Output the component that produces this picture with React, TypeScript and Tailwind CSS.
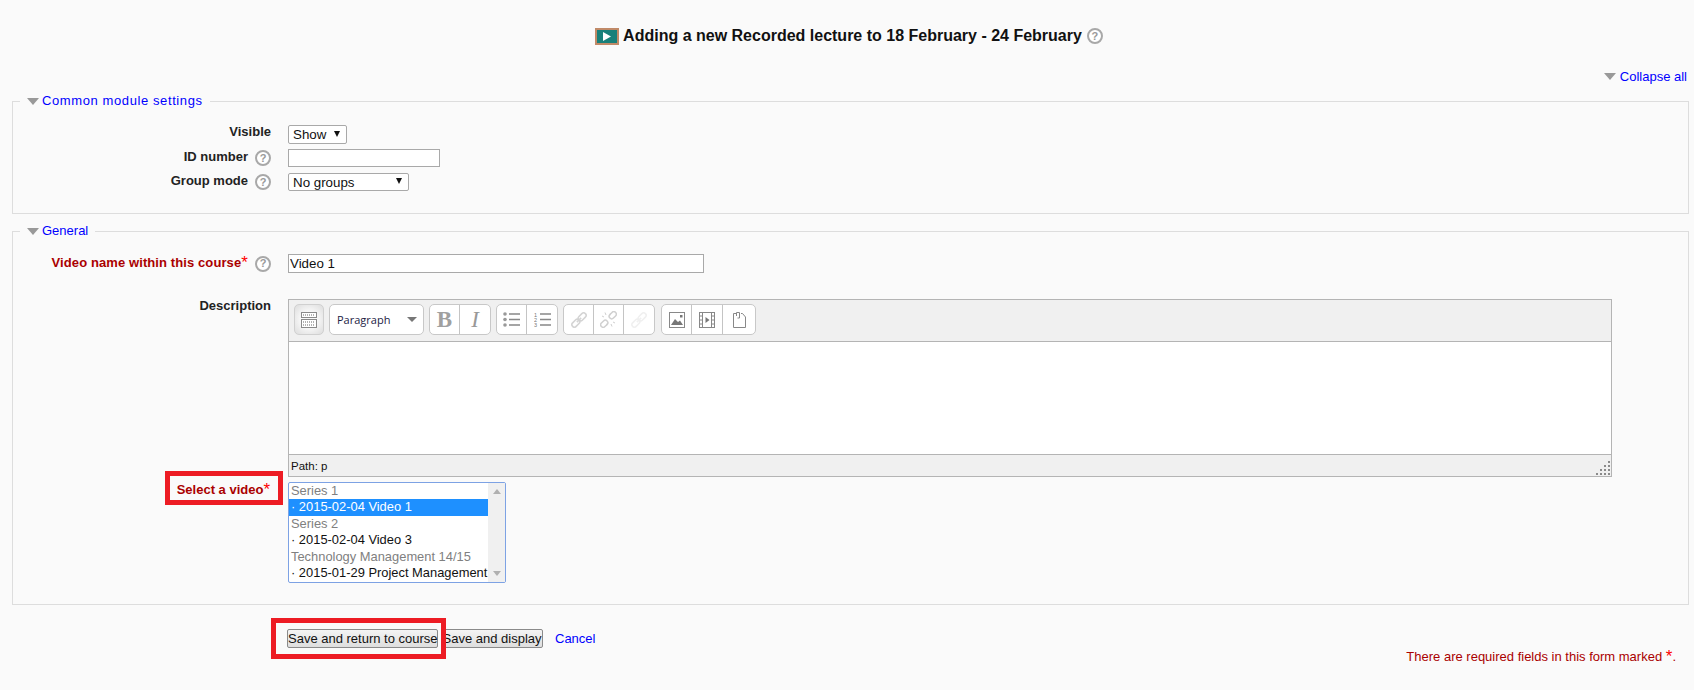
import React from "react";

function HelpIcon() {
  return (
    <span className="flex h-[16px] w-[16px] shrink-0 items-center justify-center rounded-full border-2 border-[#a8a8a8] bg-white text-[11px] font-bold leading-none text-[#999999]">
      ?
    </span>
  );
}

function Triangle({ className = "" }: { className?: string }) {
  return (
    <svg className={className} width="12" height="7" viewBox="0 0 12 7">
      <path d="M0 0h12L6 7z" fill="#999999" />
    </svg>
  );
}

function Asterisk() {
  return <span className="relative top-[1px] text-[17px] font-normal leading-[0] text-[#ff0000]">*</span>;
}

function Label({
  text,
  help,
  required,
  className = "",
}: {
  text: string;
  help?: boolean;
  required?: boolean;
  className?: string;
}) {
  return (
    <div className={`flex w-[258px] shrink-0 items-center justify-end gap-[7px] ${className}`}>
      <span className={`-mt-[3px] font-bold ${required ? "tracking-[0.1px] text-[#aa0000]" : "text-[#222222]"}`}>
        {text}
        {required && <Asterisk />}
      </span>
      {help && <HelpIcon />}
    </div>
  );
}

function Row({ children, className = "" }: { children: React.ReactNode; className?: string }) {
  return <div className={`flex gap-[17px] ${className}`}>{children}</div>;
}

function FakeSelect({ text, className = "" }: { text: string; className?: string }) {
  return (
    <div
      className={`flex items-center justify-between rounded-[2px] border border-[#a9a9a9] bg-white pl-[4px] pr-[6px] text-[13.33px] text-[#111111] ${className}`}
    >
      <span>{text}</span>
      <svg width="6" height="6" viewBox="0 0 6 6" className="-mt-[2px]">
        <path d="M0 0h6L3 6z" fill="#111111" />
      </svg>
    </div>
  );
}

function Legend({ text, className = "" }: { text: string; className?: string }) {
  return (
    <legend className="ml-[7px] flex items-center gap-[3px] px-[7px] text-[13px] leading-[15px] text-[#0000ff]">
      <Triangle />
      <span className={`-mt-[2px] ${className}`}>{text}</span>
    </legend>
  );
}

function ToolGroup({ children, className = "" }: { children: React.ReactNode; className?: string }) {
  return (
    <div className={`flex h-[31px] divide-x divide-[#c4c4c4] rounded-[5px] border border-[#c8c8c8] bg-white ${className}`}>
      {children}
    </div>
  );
}

function ToolCell({ children, className = "w-[30px]" }: { children: React.ReactNode; className?: string }) {
  return <div className={`flex items-center justify-center ${className}`}>{children}</div>;
}

function KeyboardIcon() {
  return (
    <svg width="16" height="16" viewBox="0 0 16 16" fill="none">
      <rect x="0.500" y="0.500" width="15" height="5" fill="#fff" stroke="#8a8a8a" />
      <rect x="0.500" y="7.500" width="15" height="8" fill="#fff" stroke="#8a8a8a" />
      <path d="M2 3h12M2 10h12M2 13h12" stroke="#666" strokeDasharray="1 1" />
    </svg>
  );
}

function BulletIcon() {
  return (
    <svg width="17" height="15" viewBox="0 0 17 15">
      <circle cx="2" cy="2" r="1.800" fill="#999" />
      <circle cx="2" cy="7.500" r="1.800" fill="#999" />
      <circle cx="2" cy="13" r="1.800" fill="#999" />
      <path d="M6 2h11M6 7.500h11M6 13h11" stroke="#888" strokeWidth="1.500" />
    </svg>
  );
}

function NumberIcon() {
  return (
    <svg width="17" height="15" viewBox="0 0 17 15">
      <text x="0" y="5" fontSize="5.500" fill="#777" fontFamily="Liberation Sans">1</text>
      <text x="0" y="10" fontSize="5.500" fill="#777" fontFamily="Liberation Sans">2</text>
      <text x="0" y="15" fontSize="5.500" fill="#777" fontFamily="Liberation Sans">3</text>
      <path d="M6 2h11M6 7.500h11M6 13h11" stroke="#888" strokeWidth="1.500" />
    </svg>
  );
}

function ChainIcon({ color }: { color: string }) {
  return (
    <svg width="16" height="16" viewBox="0 0 16 16" fill="none" stroke={color} strokeWidth="1.600">
      <g transform="rotate(-45 8 8)">
        <rect x="-1" y="5.500" width="9" height="5" rx="2.500" />
        <rect x="8" y="5.500" width="9" height="5" rx="2.500" />
        <path d="M5 8h6" />
      </g>
    </svg>
  );
}

function BrokenChainIcon({ color }: { color: string }) {
  return (
    <svg width="17" height="17" viewBox="0 0 17 17" fill="none" stroke={color} strokeWidth="1.500">
      <g transform="rotate(-45 8.500 8.500)">
        <rect x="-1.500" y="6" width="8" height="5" rx="2.500" />
        <rect x="10.500" y="6" width="8" height="5" rx="2.500" />
      </g>
      <path d="M2 5l2 1M5 1.500l1 2.500M15 12l-2-1M12 15.500l-1-2.500M10.500 2l-.5 2.500M6.500 15l.5-2.500" strokeWidth="1" />
    </svg>
  );
}

function ImageIcon() {
  return (
    <svg width="16" height="16" viewBox="0 0 16 16">
      <rect x="0.500" y="0.500" width="15" height="15" fill="#fff" stroke="#888" />
      <path d="M2 13l4-6 3 3 2-1.500 3 4.500z" fill="#777" />
      <rect x="11" y="3" width="2.500" height="2.500" fill="#777" />
    </svg>
  );
}

function FilmIcon() {
  return (
    <svg width="16" height="16" viewBox="0 0 16 16">
      <rect x="0.500" y="0.500" width="15" height="15" fill="#fff" stroke="#888" />
      <path d="M3.500 0v16M12.500 0v16" stroke="#888" />
      <path d="M0.500 4h3M0.500 8h3M0.500 12h3M12.500 4h3M12.500 8h3M12.500 12h3" stroke="#888" />
      <path d="M6.500 5l4 3-4 3z" fill="#777" />
    </svg>
  );
}

function PasteIcon() {
  return (
    <svg width="15" height="17" viewBox="0 0 15 17" fill="none" stroke="#888">
      <path d="M4 2.500H1.500v14h12V6l-3-3.500H9" />
      <path d="M4.500 5V1.500h3V7h-2" />
    </svg>
  );
}

function Editor() {
  return (
    <div className="flex h-[178px] w-[1324px] flex-col border border-[#b4b4b4] bg-white">
      <div className="flex h-[42px] shrink-0 gap-[5px] border-b border-[#b4b4b4] bg-[#f0f0f0] pl-[5px] pt-[4px]">
        <div className="flex h-[31px] w-[30px] items-center justify-center rounded-[5px] border border-[#d0d0d0] bg-[radial-gradient(circle,#f8f8f8_40%,#dcdcdc_100%)]">
          <KeyboardIcon />
        </div>
        <div className="flex h-[31px] w-[95px] items-center justify-between rounded-[5px] border border-[#c8c8c8] bg-white pl-[7px] pr-[6px] font-['Open_Sans',sans-serif] text-[11px] text-[#222244]">
          <span>Paragraph</span>
          <svg width="10" height="5" viewBox="0 0 10 5">
            <path d="M0 0h10L5 5z" fill="#777777" />
          </svg>
        </div>
        <ToolGroup>
          <ToolCell>
            <span className="font-['Liberation_Serif',serif] text-[23px] font-bold leading-none text-[#a0a0a0]">B</span>
          </ToolCell>
          <ToolCell>
            <span className="font-['Liberation_Serif',serif] text-[23px] italic leading-none text-[#999999]">I</span>
          </ToolCell>
        </ToolGroup>
        <ToolGroup>
          <ToolCell>
            <BulletIcon />
          </ToolCell>
          <ToolCell>
            <NumberIcon />
          </ToolCell>
        </ToolGroup>
        <ToolGroup>
          <ToolCell>
            <ChainIcon color="#d4d4d4" />
          </ToolCell>
          <ToolCell>
            <BrokenChainIcon color="#d0d0d0" />
          </ToolCell>
          <ToolCell>
            <ChainIcon color="#f0f0f0" />
          </ToolCell>
        </ToolGroup>
        <ToolGroup className="ml-px">
          <ToolCell>
            <ImageIcon />
          </ToolCell>
          <ToolCell className="w-[31px]">
            <FilmIcon />
          </ToolCell>
          <ToolCell className="w-[32px]">
            <PasteIcon />
          </ToolCell>
        </ToolGroup>
      </div>
      <div className="flex-1" />
      <div className="flex h-[22px] shrink-0 items-end justify-between border-t border-[#b4b4b4] bg-[#f0f0f0] pl-[2px] text-[11.500px] leading-[20px] text-[#111111]">
        <span>Path: p</span>
        <svg width="15" height="15" viewBox="0 0 15 15" fill="#8a8a8a">
          <path d="M12 0h2v2h-2zM8 4h2v2H8zM12 4h2v2h-2zM4 8h2v2H4zM8 8h2v2H8zM12 8h2v2h-2zM0 12h2v2H0zM4 12h2v2H4zM8 12h2v2H8zM12 12h2v2h-2z" />
        </svg>
      </div>
    </div>
  );
}

function VideoList() {
  const options = [
    { text: "Series 1", group: true },
    { text: "· 2015-02-04 Video 1", selected: true },
    { text: "Series 2", group: true },
    { text: "· 2015-02-04 Video 3" },
    { text: "Technology Management 14/15", group: true },
    { text: "· 2015-01-29 Project Management" },
  ];
  return (
    <div className="flex h-[101px] w-[218px] rounded-[2px] border border-[#7da2e4] bg-white text-[12.900px] leading-[16.400px]">
      <div className="w-[199px] overflow-hidden whitespace-nowrap">
        {options.map((o) => (
          <div
            key={o.text}
            className={`pl-[2px] ${
              o.selected ? "bg-[#1e90ff] text-white" : o.group ? "text-[#808080]" : "text-[#111111]"
            }`}
          >
            {o.text}
          </div>
        ))}
      </div>
      <div className="flex flex-1 flex-col items-center justify-between bg-[#f0f0f0] py-[6px]">
        <svg width="8" height="5" viewBox="0 0 8 5">
          <path d="M0 5h8L4 0z" fill="#b0b0b0" />
        </svg>
        <svg width="8" height="5" viewBox="0 0 8 5">
          <path d="M0 0h8L4 5z" fill="#b0b0b0" />
        </svg>
      </div>
    </div>
  );
}

export default function App() {
  return (
    <div className="min-h-[690px] w-full overflow-hidden bg-[#fafafa] font-['Liberation_Sans',Arial,sans-serif] text-[13px] leading-[15px] text-[#222222]">
      <div className="ml-[4px] flex items-center justify-center gap-[4px] pt-[27px]">
        <svg width="24" height="17" viewBox="0 0 24 17">
          <rect width="24" height="17" fill="#c08a68" />
          <rect x="2" y="2" width="20" height="13" fill="#18807a" />
          <path d="M8 4l8 4.500-8 4.500z" fill="#ffffff" />
        </svg>
        <h2 className="text-[16px] font-bold leading-[18px] text-[#111111]">
          Adding a new Recorded lecture to 18 February - 24 February
        </h2>
        <span className="ml-[1px]">
          <HelpIcon />
        </span>
      </div>

      <div className="mt-[24px] flex items-center justify-end gap-[4px] pr-[7px]">
        <Triangle />
        <span className="text-[#0000ff]">Collapse all</span>
      </div>

      <form className="ml-3 mr-[5px]">
        <fieldset className="mt-[11px] h-[119px] border border-[#dddddd] pt-[17px]">
          <Legend text="Common module settings" className="tracking-[0.6px]" />
          <Row className="h-[19px] items-center">
            <Label text="Visible" className="pb-[4px]" />
            <FakeSelect text="Show" className="h-[19px] w-[59px]" />
          </Row>
          <Row className="mt-[5px] h-[18px] items-center">
            <Label text="ID number" help />
            <input className="h-[18px] w-[152px] border border-[#a9a9a9] bg-white" />
          </Row>
          <Row className="mt-[6px] h-[18px] items-center">
            <Label text="Group mode" help />
            <FakeSelect text="No groups" className="h-[18px] w-[121px]" />
          </Row>
        </fieldset>

        <fieldset className="mt-[11px] h-[380px] border border-[#dddddd] pt-[16px]">
          <Legend text="General" />
          <Row className="h-[19px] items-center">
            <Label text="Video name within this course" help required />
            <input
              defaultValue="Video 1"
              className="h-[19px] w-[416px] border border-[#a9a9a9] bg-white px-[1px] text-[13.33px] text-[#111111]"
            />
          </Row>
          <Row className="mt-[26px]">
            <Label text="Description" className="h-[15px] pt-[1px]" />
            <Editor />
          </Row>
          <Row className="mt-[5px]">
            <div className="flex w-[258px] shrink-0 justify-end pr-[1px]">
              <span className="relative h-[15px] font-bold text-[#aa0000]">
                Select a video
                <Asterisk />
                <span className="absolute -bottom-[8px] -left-3 -right-[13px] -top-[11px] border-[5px] border-[#ed1c24]" />
              </span>
            </div>
            <VideoList />
          </Row>
        </fieldset>
      </form>

      <div className="ml-[287px] mt-[24px] flex items-center text-[13px] text-[#111111]">
        <div className="relative">
          <button className="h-[19px] w-[151px] whitespace-nowrap rounded-[2px] border border-[#8a8a8a] bg-linear-to-b from-[#f4f4f4] to-[#dedede] leading-[15px]">
            Save and return to course
          </button>
          <span className="absolute -bottom-[11px] -left-4 -right-2 -top-[11px] border-[5px] border-[#ed1c24]" />
        </div>
        <button className="ml-[3px] h-[19px] w-[102px] whitespace-nowrap rounded-[2px] border border-[#8a8a8a] bg-linear-to-b from-[#f4f4f4] to-[#dedede] leading-[15px]">
          Save and display
        </button>
        <span className="ml-[12px] text-[#0000ff]">Cancel</span>
      </div>

      <p className="mt-[1px] pr-[18px] text-right text-[#aa0000]">
        There are required fields in this form marked <Asterisk />.
      </p>
    </div>
  );
}
